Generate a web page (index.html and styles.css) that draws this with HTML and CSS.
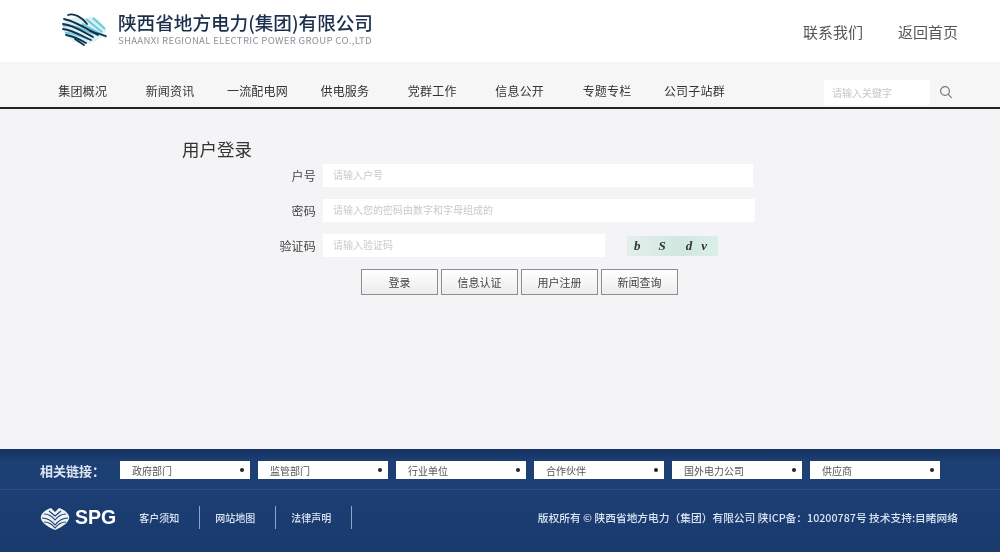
FILE: index.html
```html
<!DOCTYPE html>
<html lang="zh-CN">
<head>
<meta charset="utf-8">
<title>用户登录</title>
<link rel="stylesheet" href="styles.css">
</head>
<body>
<div class="page">
  <header class="top">
    <div class="brand">
      <svg class="logo" viewBox="0 0 48 36" fill="none">
        <path d="M2 14C8 7 16 6 24 9C32 4 40 8 46 20C42 30 30 36 18 33C8 31 3 22 2 14Z" fill="#d9f1f5"/>
        <g stroke="#6cc8d8" stroke-width="2"><path d="M3 16C12 14 24 20 34 24"/><path d="M5 23C12 22 20 26 28 29"/><path d="M26 9 42 22"/><path d="M33 8 45 19"/><path d="M22 14 46 27"/></g>
        <g stroke="#15304a" stroke-width="1.8" stroke-linecap="round"><path d="M4 9C14 11 24 17 38 25"/><path d="M3 14C13 15 24 22 33 27"/><path d="M3 19C12 20 22 26 31 30"/><path d="M6 25C13 26 19 29 26 33"/><path d="M8 5C14 3 22 7 27 14"/><path d="M30 21 46 26"/><path d="M15 29 24 35"/></g>
      </svg>
      <div class="brand-text">
        <div class="brand-cn">陕西省地方电力(集团)有限公司</div>
        <div class="brand-en">SHAANXI REGIONAL ELECTRIC POWER GROUP CO.,LTD</div>
      </div>
    </div>
    <div class="top-links"><a>联系我们</a><a>返回首页</a></div>
  </header>
  <nav class="nav">
    <a>集团概况</a><a>新闻资讯</a><a>一流配电网</a><a>供电服务</a><a>党群工作</a><a>信息公开</a><a>专题专栏</a><a>公司子站群</a>
    <div class="search-wrap">
      <div class="search">请输入关键字</div>
      <svg class="search-icon" viewBox="0 0 14 14" fill="none" stroke="#777" stroke-width="1.2"><circle cx="6" cy="6" r="4.4"/><path d="M9.2 9.2 12.6 12.8"/></svg>
    </div>
  </nav>
  <main class="main">
    <h1 class="title">用户登录</h1>
    <form class="form">
      <label class="label">户号</label><div class="input wide">请输入户号</div>
      <label class="label">密码</label><div class="input wider">请输入您的密码由数字和字母组成的</div>
      <label class="label">验证码</label>
      <div class="captcha-row">
        <div class="input short">请输入验证码</div>
        <div class="captcha"><i>b</i><i>S</i><i>d</i><i>v</i></div>
      </div>
    </form>
    <div class="buttons">
      <button type="button" class="btn">登录</button><button type="button" class="btn">信息认证</button><button type="button" class="btn">用户注册</button><button type="button" class="btn">新闻查询</button>
    </div>
  </main>
  <footer class="footer">
    <div class="links-row">
      <span class="links-label">相关链接：</span>
      <div class="drop"><span>政府部门</span><b></b></div>
      <div class="drop"><span>监管部门</span><b></b></div>
      <div class="drop"><span>行业单位</span><b></b></div>
      <div class="drop"><span>合作伙伴</span><b></b></div>
      <div class="drop"><span>国外电力公司</span><b></b></div>
      <div class="drop"><span>供应商</span><b></b></div>
    </div>
    <div class="bottom-row">
      <svg class="spg-logo" viewBox="0 0 30 24" fill="none">
        <path d="M1 10C3 5 8 3 11 2C13 4 14 5 15 6C16 5 17 4 19 2C22 3 27 5 29 10C30 13 27 17 24 19C20 22 17 23 15 24C13 23 10 22 6 19C3 17 0 13 1 10Z" fill="#eef3f6"/>
        <g stroke="#1c3e74" stroke-width="1.2"><path d="M4 8C8 8 12 10 15 14C18 10 22 8 26 8"/><path d="M2 12C7 12 11 14 15 19C19 14 23 12 28 12"/><path d="M4 16C8 16 12 18 15 22C18 18 22 16 26 16"/><path d="M9 5 15 10 21 5"/></g>
      </svg>
      <span class="spg">SPG</span>
      <a class="foot-link">客户须知</a><a class="foot-link">网站地图</a><a class="foot-link">法律声明</a>
      <span class="copyright">版权所有 © 陕西省地方电力（集团）有限公司 陕ICP备：10200787号 技术支持:目睹网络</span>
    </div>
  </footer>
</div>
</body>
</html>
```
FILE: styles.css
```css
* { box-sizing: border-box; }
html, body { margin: 0; padding: 0; }
body { width: 1000px; height: 552px; overflow: hidden; background: #f4f4f6; font-family: "Noto Sans CJK SC", "Noto Sans", sans-serif; color: #333; }
.page { display: flex; flex-direction: column; height: 552px; filter: blur(.6px); }
a { color: inherit; text-decoration: none; }

.top { height: 62px; flex: none; background: #fff; display: flex; justify-content: space-between; padding: 10px 42px 0 60px; }
.brand { display: flex; gap: 10px; align-items: flex-start; }
.logo { width: 48px; height: 36px; }
.brand-cn { font-size: 18.6px; line-height: 24px; font-weight: 500; color: #1c2f4c; white-space: nowrap; }
.brand-en { font-size: 9.6px; line-height: 11px; margin-top: 1px; color: #8c929a; white-space: nowrap; letter-spacing: .3px; }
.top-links { display: flex; gap: 35px; font-size: 15px; line-height: 22px; color: #555; padding-top: 11px; }

.nav { height: 47px; flex: none; background: #f6f6f6; border-bottom: 2px solid #222; display: flex; align-items: center; padding: 11px 47px 0 39px; font-size: 12px; color: #333; }
.nav a { width: 87.4px; text-align: center; white-space: nowrap; letter-spacing: .2px; }
.search-wrap { margin: 4px 0 0 auto; display: flex; align-items: center; gap: 9px; }
.search { width: 106px; height: 25px; line-height: 25px; background: #fff; padding-left: 8px; font-size: 10px; color: #c4c4c4; white-space: nowrap; }
.search-icon { width: 14px; height: 14px; }

.main { flex: 1; background: #f4f4f6; padding: 27px 0 0 182px; }
.title { margin: 0 0 2px; font-size: 17.5px; line-height: 26px; font-weight: 400; color: #333; }
.form { display: grid; grid-template-columns: 134px auto; column-gap: 7px; row-gap: 12px; width: 573px; align-items: center; }
.label { font-size: 12px; color: #444; text-align: right; letter-spacing: .2px; }
.input { height: 23px; background: #fff; font-size: 10px; line-height: 22px; padding-left: 10px; color: #c9c9c9; white-space: nowrap; }
.wide { width: 430px; }
.wider { width: 432px; }
.short { width: 282px; }
.captcha-row { display: flex; align-items: center; gap: 22px; }
.captcha { width: 91px; height: 20px; background: linear-gradient(90deg, #e4eeea, #cfe8df 60%, #dbefe8); display: flex; align-items: center; font: italic 700 13px "Liberation Serif", serif; color: #333; padding-left: 7px; }
.captcha i { display: block; margin-right: 18px; }
.captcha i:nth-child(2) { margin-right: 20px; }
.captcha i:nth-child(3) { margin-right: 9px; }
.buttons { display: flex; gap: 3px; margin: 12px 0 0 179px; }
.btn { width: 77px; height: 26px; padding: 0; border: 1px solid #8e8e8e; background: linear-gradient(#fff, #ececec); font: 11px "Noto Sans CJK SC", sans-serif; color: #444; }

.footer { height: 103px; flex: none; background: #1b3d72; color: #fff; }
.links-row { height: 41px; display: flex; align-items: center; padding: 2px 0 0 40px; border-bottom: 1px solid #2e4f85; background: linear-gradient(#14305f, #1c3f74 30%); }
.links-label { width: 80px; font-size: 13px; font-weight: 700; color: #dde6f2; white-space: nowrap; }
.drop { width: 130px; height: 18px; background: #fff; margin-right: 8px; display: flex; align-items: center; justify-content: space-between; padding: 0 6px 0 12px; font-size: 10px; color: #555; }
.drop b { width: 4px; height: 4px; border-radius: 50%; background: #222; }
.bottom-row { height: 61px; display: flex; align-items: center; padding: 0 42px 6px 40px; background: linear-gradient(#1c3e74, #1a3a6d); }
.spg-logo { width: 30px; height: 24px; flex: none; }
.spg { font: 700 19.5px "Liberation Sans", sans-serif; margin: 0 23px 0 5px; }
.foot-link { font-size: 10px; width: 76px; padding-right: 15px; color: #dbe5f2; font-weight: 500; position: relative; white-space: nowrap; }
.foot-link::after { content: ""; position: absolute; right: 15px; top: -4px; bottom: -4px; width: 1px; background: #8ea5c8; }
.copyright { margin-left: auto; font-size: 10.72px; font-weight: 500; color: #dbe5f2; white-space: nowrap; }
```
